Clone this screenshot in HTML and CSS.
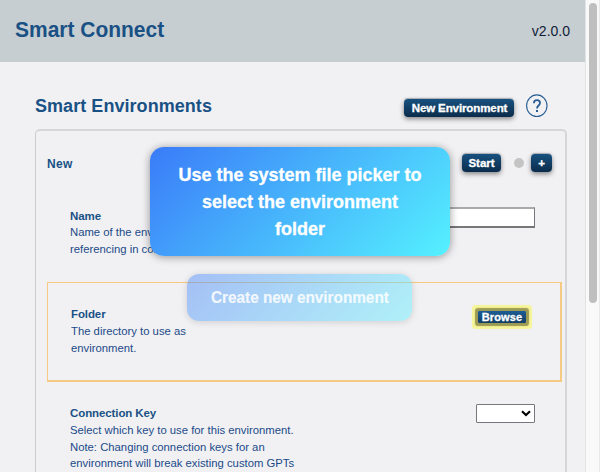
FILE: index.html
```html
<!DOCTYPE html>
<html lang="en">
<head>
<meta charset="utf-8">
<title>Smart Connect</title>
<link rel="stylesheet" href="styles.css">
</head>
<body>
<div class="window">
  <div class="page">
    <header class="header">
      <h1><span>Smart Connect</span></h1>
      <span class="version">v2.0.0</span>
    </header>
    <main class="content">
      <div class="title-row">
        <h2><span>Smart Environments</span></h2>
        <button class="btn btn-new"><span>New Environment</span></button>
        <svg class="help" width="24" height="24" viewBox="0 0 24 24" fill="none" stroke="#285e94">
          <ellipse cx="11.8" cy="11.7" rx="10.2" ry="10.8" stroke-width="1.1"/>
          <path d="M8.9 9.3C8.9 7.2 10.1 6.2 11.9 6.2s3.1 1 3.1 2.8c0 2.4-3 2.6-3 5.4" stroke-width="1.8"/>
          <path d="M12 16v2" stroke-width="2"/>
        </svg>
      </div>
      <section class="panel">
        <div class="panel-head">
          <h3><span>New</span></h3>
          <button class="btn btn-start"><span>Start</span></button>
          <i class="dot"></i>
          <button class="btn btn-plus"><span>+</span></button>
        </div>
        <div class="field field-name">
          <div class="label"><b>Name</b><p>Name of the environment for<br>referencing in configuration.</p></div>
          <div class="input"></div>
        </div>
        <div class="field field-folder">
          <div class="label"><b>Folder</b><p>The directory to use as<br>environment.</p></div>
          <button class="btn btn-browse"><span>Browse</span></button>
        </div>
        <div class="field field-key">
          <div class="label"><b>Connection Key</b><p>Select which key to use for this environment.<br>Note: Changing connection keys for an<br>environment will break existing custom GPTs</p></div>
          <div class="select"><svg width="10" height="7" viewBox="0 0 10 7" fill="none" stroke="#000" stroke-width="2.1"><path d="M1 1.2L5 5L9 1.2"/></svg></div>
        </div>
      </section>
    </main>
  </div>
  <div class="scrollbar"><div class="thumb"></div></div>
</div>
<div class="toasts">
  <div class="toast toast-main"><span>Use the system file picker to<br>select the environment<br>folder</span></div>
  <div class="toast toast-old"><span>Create new environment</span></div>
</div>
</body>
</html>
```
FILE: styles.css
```css
* { box-sizing: border-box; }
body {
  margin: 0;
  height: 472px;
  overflow: hidden;
  font-family: "Liberation Sans", Arial, sans-serif;
  background: #f1f1f4;
  color: #1b4a87;
}
h1, h2, h3, p { margin: 0; }
.window { display: flex; height: 472px; overflow: hidden; }
.page { flex: 1; height: 472px; overflow: hidden; }
.header {
  height: 62px;
  padding: 0 15px;
  display: flex;
  justify-content: space-between;
  align-items: center;
  background: #c7ced1;
}
h1 { font-size: 22px; line-height: 26px; color: #1a5185; margin-top: -2px; transform: scaleX(.953); transform-origin: left; }
.version { font-size: 14px; color: #101c38; }
.content { padding: 31px 18px 0 35px; }
.title-row { display: flex; align-items: center; height: 26px; }
h2 { flex: 1; font-size: 18px; line-height: 22px; letter-spacing: .05px; color: #1a5185; }
.btn {
  flex: none;
  display: flex;
  align-items: center;
  justify-content: center;
  padding: 0;
  border: 0;
  border-radius: 4px;
  height: 18px;
  font: bold 11.5px/14px "Liberation Sans", Arial, sans-serif;
  color: #fff;
  white-space: nowrap;
  background: linear-gradient(#17517f, #0b2c4b);
  box-shadow: 0 -1px 1px #a9adb2, 0 2px 5px rgba(0, 0, 0, .45);
  -webkit-text-stroke: .3px #fff;
}
.btn-new { width: 110px; margin: 4px 11px 0 0; padding-left: 1px; letter-spacing: -.1px; }
.help { flex: none; margin-right: 18px; }
.panel {
  width: 532px;
  height: 400px;
  margin-top: 10px;
  padding: 0 4px 0 11px;
  border: 1px solid #cbccce;
  border-top: 2px solid #d6d6d8;
  border-right: 2px solid #d6d6d8;
  border-radius: 5px;
}
.panel-head {
  display: flex;
  align-items: center;
  height: 64px;
  padding-right: 9px;
}
h3 { flex: 1; font-size: 12px; line-height: 16px; letter-spacing: .3px; color: #1a5185; padding-top: 1px; }
.btn-start { width: 39px; margin-right: 13px; }
.dot { flex: none; width: 10px; height: 10px; margin-right: 7px; border-radius: 50%; background: #c4c4c4; }
.btn-plus { width: 21px; }
.field { display: flex; justify-content: space-between; }
.label { font-size: 11.3px; line-height: 17px; white-space: nowrap; }
.label b { display: block; color: #1a5185; font-size: 11.5px; letter-spacing: -.1px; }
.field-name { height: 87px; padding: 12px 26px 0 23px; }
.field-name .label, .field-key .label { padding-top: 1px; }
.field-name p { margin-top: -1px; line-height: 17px; }
.input { width: 150px; height: 21px; border: 1px solid #77787b; border-top: 2px solid #aaa; border-bottom: 2px solid #777; background: #fff; }
.field-folder {
  width: 515px;
  height: 100px;
  padding: 23px 33px 0 23px;
  border: 1px solid #f6ca82;
  border-right-width: 2px;
  border-bottom-width: 2px;
}
.btn-browse {
  width: 48px;
  height: 12px;
  margin: 5px 1px 0 0;
  border-radius: 1px;
  font-size: 11px;
  letter-spacing: .1px;
  background: linear-gradient(#1c5d94, #123e65);
  box-shadow: 0 0 1px 3px #9c9a53, 0 0 1px 6px #f6f497;
}
.field-key { padding: 22px 26px 0 23px; }
.field-key p { line-height: 16.7px; }
.select {
  display: flex;
  align-items: center;
  justify-content: flex-end;
  width: 59px;
  height: 19px;
  padding-right: 3px;
  border: 1px solid #77787b;
  border-radius: 1px;
  background: #fff;
}
.scrollbar { width: 15px; flex: none; padding: 3px 1px 0 3px; border-left: 1px solid #e3e3e4; border-right: 1px solid #e8e8e9; background: #f9f9f9; }
.thumb { width: 8px; height: 300px; border-radius: 4px; background: #bfbfbf; }
.toasts {
  position: absolute;
  top: 147px;
  left: 150px;
  width: 300px;
  display: flex;
  flex-direction: column;
  align-items: center;
  gap: 18px;
}
.toast {
  display: flex;
  align-items: center;
  justify-content: center;
  text-align: center;
  color: #fff;
  font-weight: bold;
  border-radius: 14px;
  background: linear-gradient(135deg, #3a7bf8, #55f1ff);
  box-shadow: 0 1px 8px rgba(0, 0, 0, .4);
  -webkit-text-stroke: .3px #fff;
}
.toast-main { width: 300px; height: 109px; padding-top: 1px; font-size: 18px; line-height: 27px; }
.toast-old {
  width: 225px;
  height: 47px;
  margin-right: 1px;
  padding-top: 1px;
  font-size: 16px;
  line-height: 24px;
  border-radius: 12px;
  color: rgba(255, 255, 255, .85);
  background: linear-gradient(135deg, rgba(58, 123, 248, .42), rgba(85, 241, 255, .42));
  box-shadow: 0 1px 7px rgba(0, 0, 0, .15);
  -webkit-text-stroke: .2px rgba(255, 255, 255, .85);
}
.toast-old span { transform: scaleX(.957); }
```
